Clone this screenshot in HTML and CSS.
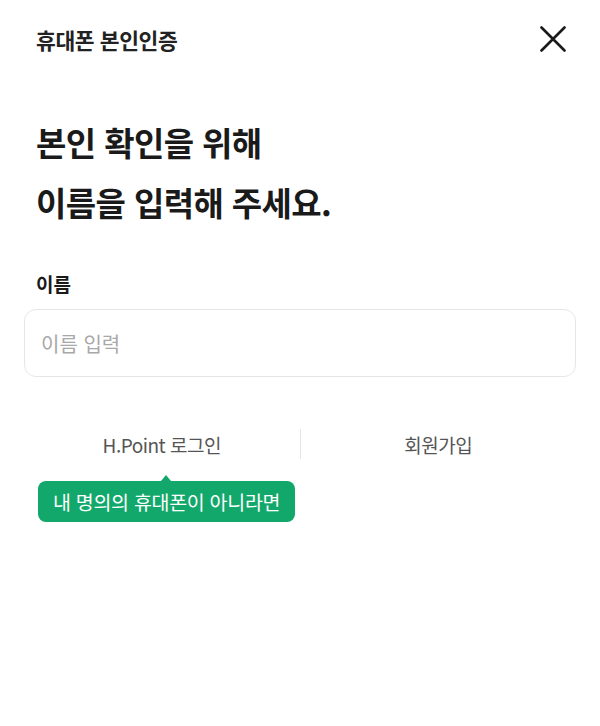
FILE: index.html
```html
<!DOCTYPE html>
<html lang="ko">
<head>
    <meta charset="UTF-8">
    <meta name="viewport" content="width=device-width, initial-scale=1.0">
    <title>휴대폰 본인인증</title>
    <link rel="stylesheet" href="styles.css">
</head>
<body>
    <div class="page">
        <!-- 상단 헤더 -->
        <header class="header">
            <h1 class="header-title">휴대폰 본인인증</h1>
            <button class="close-btn" aria-label="닫기">
                <svg width="26" height="26" viewBox="0 0 26 26">
                    <path d="M1.5 1.5 L24.5 24.5 M24.5 1.5 L1.5 24.5" stroke="#1a1a1a" stroke-width="2.6" stroke-linecap="round" fill="none"/>
                </svg>
            </button>
        </header>

        <h2 class="headline">본인 확인을 위해<br>이름을 입력해 주세요.</h2>

        <div class="field">
            <label class="field-label" for="name">이름</label>
            <input class="field-input" id="name" type="text" placeholder="이름 입력">
        </div>

        <div class="links">
            <a class="link">H.Point 로그인</a>
            <span class="divider"></span>
            <a class="link">회원가입</a>
        </div>

        <div class="tooltip">내 명의의 휴대폰이 아니라면</div>
    </div>
</body>
</html>
```

FILE: styles.css
```css
body {
    margin: 0;
    padding: 0;
    font-family: 'Noto Sans CJK KR', 'Noto Sans', sans-serif;
    background: white;
    color: #1a1a1a;
}

.page {
    padding: 0 24px;
}

/* 헤더 */
.header {
    display: flex;
    justify-content: space-between;
    align-items: center;
    height: 78px;
    padding: 0 10px 0 12px;
}

.header-title {
    margin: 0;
    font-size: 21.5px;
    font-weight: 700;
    letter-spacing: -0.4px;
    color: #222;
}

.close-btn {
    border: none;
    background: none;
    padding: 0;
    width: 26px;
    height: 26px;
    cursor: pointer;
}

.headline {
    margin: 34px 0 0 12px;
    font-size: 33px;
    font-weight: 700;
    line-height: 60px;
    letter-spacing: -0.6px;
    color: #1a1a1a;
}

/* 입력 영역 */
.field {
    margin-top: 38px;
}

.field-label {
    display: block;
    margin-left: 12px;
    font-size: 19px;
    font-weight: 700;
    color: #1a1a1a;
}

.field-input {
    box-sizing: border-box;
    display: block;
    width: 100%;
    height: 68px;
    margin-top: 12px;
    padding: 0 16px;
    border: 1.5px solid #e6e6e6;
    border-radius: 12px;
    font-family: inherit;
    font-size: 20px;
    color: #222;
    outline: none;
}

.field-input::placeholder {
    color: #a8a8a8;
}

.links {
    display: flex;
    align-items: center;
    margin-top: 52px;
}

.link {
    flex: 1;
    text-align: center;
    font-size: 19px;
    letter-spacing: -0.5px;
    color: #555;
}

.divider {
    width: 1px;
    height: 30px;
    background: #e6e6e6;
}

.tooltip {
    position: relative;
    display: inline-block;
    margin: 22px 0 0 14px;
    padding: 0 15px;
    height: 41px;
    line-height: 41px;
    background: #13a86b;
    border-radius: 8px;
    color: white;
    font-size: 19.5px;
    letter-spacing: -0.3px;
}

.tooltip::before {
    content: '';
    position: absolute;
    top: -6px;
    left: 123px;
    border-left: 5px solid transparent;
    border-right: 5px solid transparent;
    border-bottom: 6px solid #13a86b;
}
```
